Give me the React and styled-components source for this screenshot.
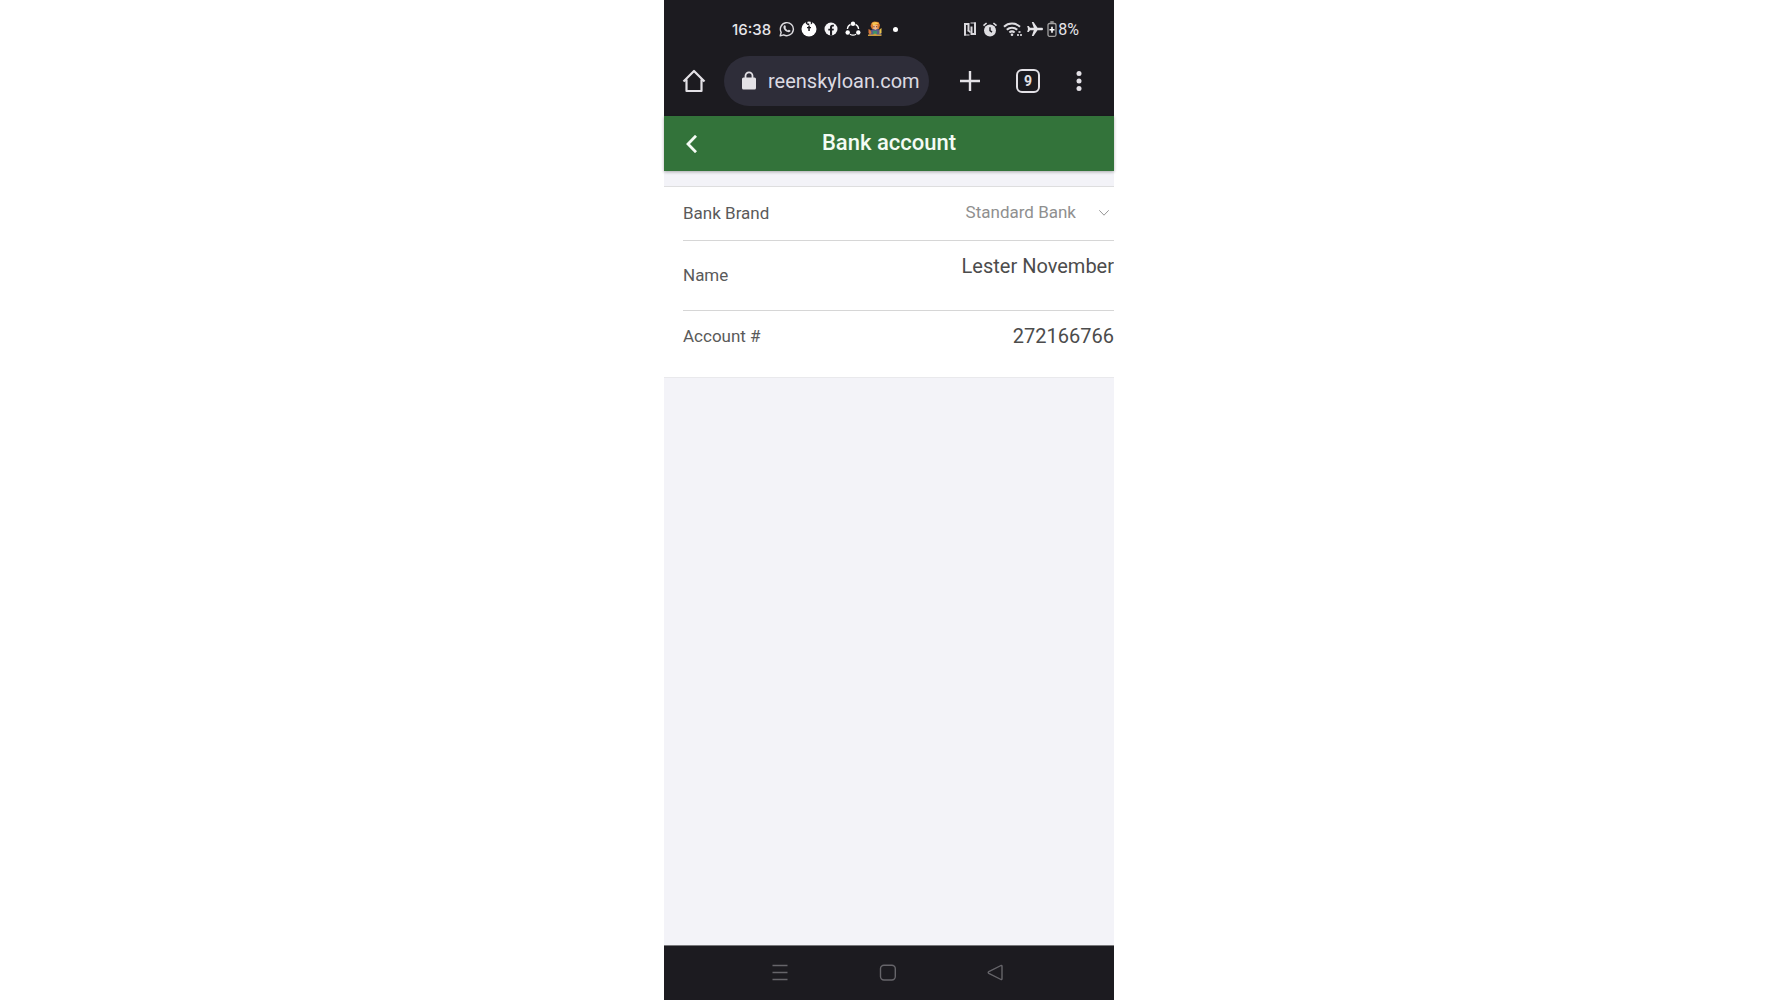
import React, { useState } from 'react';
import styled, { createGlobalStyle } from 'styled-components';

const App = () => {
  const [bank, setBank] = useState('Standard Bank');
  const [url, setUrl] = useState('reenskyloan.com');
  const [name, setName] = useState('Lester November');
  const [account, setAccount] = useState('272166766');

  return (
    <>
      <GlobalStyle />
      <Phone>
        <StatusBar>
          <Clock>16:38</Clock>
          <Notifications>
            <WhatsAppIcon />
            <AlertIcon />
            <FacebookIcon />
            <ShareIcon />
            <HeroIcon />
          </Notifications>
          <Dot />
          <System>
            <NfcIcon />
            <AlarmIcon />
            <WifiIcon />
            <PlaneIcon />
            <Battery>
              <BatteryIcon />
              8%
            </Battery>
          </System>
        </StatusBar>

        <Toolbar>
          <IconButton aria-label="Home">
            <HomeIcon />
          </IconButton>
          <AddressBar>
            <LockIcon />
            <AddressInput
              aria-label="Address"
              value={url}
              onChange={e => setUrl(e.target.value)}
            />
          </AddressBar>
          <ToolbarActions>
            <IconButton aria-label="New tab">
              <PlusIcon />
            </IconButton>
            <TabCount aria-label="Open tabs">9</TabCount>
            <IconButton aria-label="More">
              <MoreIcon />
            </IconButton>
          </ToolbarActions>
        </Toolbar>

        <Header>
          <IconButton aria-label="Back">
            <BackIcon />
          </IconButton>
          <Title>Bank account</Title>
        </Header>

        <Content>
          <Form>
            <Row $height={53}>
              <Label htmlFor="bank">Bank Brand</Label>
              <SelectBox>
                <Select id="bank" value={bank} onChange={e => setBank(e.target.value)}>
                  <option>Standard Bank</option>
                </Select>
                <ChevronIcon />
              </SelectBox>
            </Row>
            <Row $height={70}>
              <Label htmlFor="name">Name</Label>
              <Field id="name" value={name} onChange={e => setName(e.target.value)} />
            </Row>
            <Row $height={52}>
              <Label htmlFor="account">Account #</Label>
              <Field id="account" value={account} onChange={e => setAccount(e.target.value)} />
            </Row>
          </Form>
        </Content>

        <NavBar>
          <IconButton aria-label="Recent apps">
            <RecentsIcon />
          </IconButton>
          <IconButton aria-label="Home screen">
            <SquareIcon />
          </IconButton>
          <IconButton aria-label="Go back">
            <TriangleIcon />
          </IconButton>
        </NavBar>
      </Phone>
    </>
  );
};

/* status bar icons */

const WhatsAppIcon = () =>
<svg width="16" height="16" viewBox="0 0 16 16" fill="none">
  <path d="M1.2 14.8l1-3.5A6.5 6.5 0 1 1 4.700 13.800z" stroke="#dddce0" strokeWidth="1.4" strokeLinejoin="round" />
  <path d="M5.200 4.600c.5-.5 1-.4 1.200.1l.5 1.200c.1.400-.6.900-.5 1.200.5 1 1.300 1.800 2.400 2.300.4.100.8-.8 1.200-.7l1.300.7c.4.200.300.8-.1 1.200-.8.900-2 .8-3.200.2-1.500-.7-2.700-2-3.300-3.400-.4-1.100-.3-2.200.5-2.800z" fill="#dddce0" />
</svg>;

const AlertIcon = () =>
<svg width="16" height="16" viewBox="0 0 16 16">
  <circle cx="8" cy="8" r="7.500" fill="#fff" />
  <path d="M4.800 0h1.600v2.600h1.800V4H6.600L4.800 2.600zM9.800 0h1.400v2.600L9.800 3.600zM7.300 4.500h1.500V6H10v1.300H8.800V10H7.300V7.300H6V6h1.300z" fill="#1c1b20" />
</svg>;

const FacebookIcon = () =>
<svg width="16" height="16" viewBox="0 0 16 16">
  <circle cx="8" cy="8" r="6.500" fill="#f4f4f6" />
  <path d="M7 14.600V9.600H5.300V7.700H7V6.300C7 4.600 8 3.700 9.500 3.700l1.400.1v1.600h-.8c-.8 0-1 .4-1 1v1.300h1.800l-.3 1.900H9.100v5z" fill="#1c1b20" />
</svg>;

const ShareIcon = () =>
<svg width="16" height="16" viewBox="0 0 16 16" fill="none">
  <path d="M5.500 3.400A5.600 5.600 0 0 0 2.400 8M10.500 3.400A5.600 5.600 0 0 1 13.600 8M5 13.200a5.600 5.600 0 0 0 6 0" stroke="#fff" strokeWidth="1.300" />
  <circle cx="8" cy="2.700" r="2.200" fill="#fff" />
  <circle cx="2.700" cy="11.500" r="2.200" fill="#fff" />
  <circle cx="13.300" cy="11.500" r="2.200" fill="#fff" />
</svg>;

const HeroIcon = () =>
<svg width="16" height="16" viewBox="0 0 16 16">
  <path d="M3 10l3-2h5l3 2 .5 4H2z" fill="#5a5d86" />
  <path d="M4.500 2L7 .5l4.500.5 1.500 3-1 4H5L3.500 5z" fill="#d9782c" />
  <path d="M6 4h4.500v3.500L8.500 9 6 7.500z" fill="#f2b98b" />
  <path d="M5 1.800l4-.8 3 1.500-6 2z" fill="#f7c651" />
  <path d="M6.300 5.200h1.200v1H6.300zM9 5.200h1.200v1H9z" fill="#6a3526" />
  <path d="M1.500 8l2 1 1 3-1.500 1.500L1.500 12z" fill="#d9783a" />
  <path d="M6 10h4v3H6z" fill="#3f8f6e" />
  <path d="M12.500 8.500l2-1.500v5l-2 1z" fill="#e9c24a" />
  <path d="M1 13.500h5l2-1 2 1h4.500V15H1z" fill="#c99a3e" />
</svg>;

const NfcIcon = () =>
<svg width="14" height="14" viewBox="0 0 14 14" fill="none" stroke="#d8d7db" strokeWidth="2">
  <path d="M2 13.500V2H5.500V9.500M12 .5V12H8.500V4.500" />
  <path d="M1 13h5.500M7.500 1H13" strokeWidth="1.200" />
  <path d="M5 8l2.500 2.500" strokeWidth="1.500" />
</svg>;

const AlarmIcon = () =>
<svg width="18" height="15" viewBox="0 0 18 15">
  <circle cx="9" cy="8.500" r="6" fill="#dedde1" />
  <path d="M2.500 3.700L5.600 1M15.500 3.700L12.400 1" stroke="#dedde1" strokeWidth="1.600" />
  <path d="M9 5.300v3.300l2 1.500" fill="none" stroke="#1c1b20" strokeWidth="1.400" />
</svg>;

const WifiIcon = () =>
<svg width="20" height="16" viewBox="0 0 20 16" fill="none">
  <path d="M1 5.800a11.600 11.600 0 0 1 16 0M3.800 8.800a7.600 7.600 0 0 1 10.400 0M6.400 11.500a4 4 0 0 1 5.200 0" stroke="#dedde1" strokeWidth="2" />
  <circle cx="9" cy="13.700" r="1.300" fill="#dedde1" />
  <path d="M15.500 10h2v2h-2zM17 13h2v2h-2zM14 13h2v2h-2z" fill="#b9b8bd" />
</svg>;

const PlaneIcon = () =>
<svg width="16" height="14" viewBox="0 0 16 14">
  <path d="M16 7c0-.8-.6-1.300-1.300-1.300H10.500L6.500 0H4.800l2 5.700H3L1.700 4H.2l.8 3-.8 3h1.500L3 8.300h3.800L4.800 14h1.700l4-5.700h4.200C15.400 8.300 16 7.800 16 7z" fill="#e4e3e7" />
</svg>;

const BatteryIcon = () =>
<svg width="10" height="16" viewBox="0 0 10 16" fill="none">
  <rect x="1" y="2.500" width="8" height="12.800" rx="1.500" stroke="#a3a2a2" strokeWidth="1.300" />
  <path d="M3.300 1h3.400" stroke="#a3a2a2" strokeWidth="1.600" />
  <path d="M5 5.800v6M2.500 8.800h5" stroke="#fff" strokeWidth="1.600" />
</svg>;

/* toolbar icons */

const HomeIcon = () =>
<svg width="24" height="24" viewBox="0 0 24 24" fill="none" stroke="#e3e1e6" strokeWidth="2.200" strokeLinejoin="round">
  <path d="M1.500 12.500L12 2l10.500 10.500M4.500 10.500V22h15V10.500" />
</svg>;

const LockIcon = () =>
<svg width="14" height="20" viewBox="0 0 14 20">
  <rect y="6.500" width="14" height="12" rx="1.500" fill="#e3e1e6" />
  <path d="M3.500 8V4.800a3.500 3.500 0 0 1 7 0V8" fill="none" stroke="#e3e1e6" strokeWidth="1.800" />
</svg>;

const PlusIcon = () =>
<svg width="20" height="20" viewBox="0 0 20 20" stroke="#e3e1e6" strokeWidth="2.400">
  <path d="M10 0v20M0 10h20" />
</svg>;

const MoreIcon = () =>
<svg width="6" height="20" viewBox="0 0 6 20" fill="#e3e1e6">
  <circle cx="3" cy="2.600" r="2.500" />
  <circle cx="3" cy="10" r="2.500" />
  <circle cx="3" cy="17.400" r="2.500" />
</svg>;

const BackIcon = () =>
<svg width="12" height="18" viewBox="0 0 12 18" fill="none" stroke="#f4fbf4" strokeWidth="2.800">
  <path d="M11 .8L3 9l8 8.200" />
</svg>;

const ChevronIcon = () =>
<Chevron width="10" height="6" viewBox="0 0 10 6" fill="none" stroke="#969696">
  <path d="M.3.300L5 5.200 9.700.3" />
</Chevron>;

/* navigation icons */

const RecentsIcon = () =>
<svg width="18" height="18" viewBox="0 0 18 18" stroke="#66656a" strokeWidth="1.500">
  <path d="M1.500 1.500h15M1.500 8.500h15M1.500 15.500h15" />
</svg>;

const SquareIcon = () =>
<svg width="18" height="18" viewBox="0 0 18 18" fill="none" stroke="#66656a" strokeWidth="1.400">
  <rect x="1.500" y="1.200" width="14.800" height="14.800" rx="3.500" />
</svg>;

const TriangleIcon = () =>
<svg width="18" height="18" viewBox="0 0 18 18" fill="none" stroke="#66656a" strokeWidth="1.400" strokeLinejoin="round">
  <path d="M14 1.500L1.800 7.700q-1.200.8 0 1.600L14 15.500q1 .2 1-.8V2.300q0-1-1-.8z" />
</svg>;

const GlobalStyle = createGlobalStyle`
  * {
    box-sizing: border-box;
  }

  body {
    margin: 0;
    background-color: #fff;
    font-family: Roboto, sans-serif;
  }

  svg {
    display: block;
    flex: none;
  }
`;

const Phone = styled.div`
  display: flex;
  flex-direction: column;
  width: 100%;
  max-width: 450px;
  min-height: 100vh;
  margin: 0 auto;
  background-color: #f3f3f8;
`;

const StatusBar = styled.div`
  display: flex;
  align-items: center;
  height: 56px;
  padding: 2px 35px 0 68px;
  background-color: #1c1b20;
  color: #e6e5e9;
`;

const Clock = styled.time`
  font-family: Inter, sans-serif;
  font-size: 15px;
  font-weight: 500;
`;

const Notifications = styled.div`
  display: flex;
  gap: 6px;
  margin-left: 8px;
`;

const Dot = styled.span`
  width: 5px;
  height: 5px;
  margin-left: 10px;
  border-radius: 50%;
  background-color: #fff;
`;

const System = styled.div`
  display: flex;
  align-items: center;
  gap: 4px;
  margin-left: auto;
`;

const Battery = styled.div`
  display: flex;
  align-items: center;
  gap: 1px;
  font-size: 16px;
`;

const Toolbar = styled.div`
  display: flex;
  align-items: center;
  height: 60px;
  padding: 0 32px 10px 18px;
  background-color: #1c1b20;
`;

const IconButton = styled.button`
  display: flex;
  align-items: center;
  padding: 0;
  border: 0;
  background: none;
  cursor: pointer;
`;

const AddressBar = styled.div`
  display: flex;
  flex: 1;
  align-items: center;
  gap: 12px;
  min-width: 0;
  height: 50px;
  margin-left: 18px;
  padding: 0 8px 0 18px;
  border-radius: 25px;
  background-color: #2e2d39;
`;

const AddressInput = styled.input`
  flex: 1;
  min-width: 0;
  padding: 0;
  border: 0;
  outline: none;
  background: none;
  color: #dcdae2;
  font-family: inherit;
  font-size: 20px;
`;

const ToolbarActions = styled.div`
  display: flex;
  align-items: center;
  gap: 36px;
  margin-left: 31px;
`;

const TabCount = styled.button`
  width: 24px;
  height: 24px;
  padding: 0;
  border: 2px solid #e3e1e6;
  border-radius: 6px;
  background: none;
  color: #e3e1e6;
  font-family: inherit;
  font-size: 14px;
  font-weight: 700;
  line-height: 20px;
  cursor: pointer;
`;

const Header = styled.header`
  display: flex;
  align-items: center;
  height: 55px;
  padding: 0 21px;
  background-color: #33733a;
  box-shadow: 0 1px 3px rgba(0, 0, 0, .3);
`;

const Title = styled.h1`
  flex: 1;
  margin: 0 12px 0 0;
  padding-bottom: 2px;
  color: #f4fbf4;
  font-size: 22px;
  font-weight: 500;
  text-align: center;
`;

const Content = styled.main`
  flex: 1;
  padding-top: 15px;
`;

const Form = styled.form`
  padding: 0 0 15px 19px;
  border-top: 1px solid #dededf;
  border-bottom: 1px solid #e9e9ec;
  background-color: #fff;
`;

const Row = styled.div`
  display: flex;
  align-items: center;
  height: ${props => props.$height}px;

  & + & {
    border-top: 1px solid #d6d6d6;
  }
`;

const Label = styled.label`
  flex: none;
  padding-bottom: 2px;
  color: #5a5a5a;
  font-size: 17px;
`;

const SelectBox = styled.div`
  position: relative;
  flex: 1;
`;

const Select = styled.select`
  width: 100%;
  height: 52px;
  padding: 0 38px 4px 0;
  border: 0;
  outline: none;
  appearance: none;
  background: none;
  color: #8f8f8f;
  font-family: inherit;
  font-size: 17px;
  text-align: right;
  text-align-last: right;
`;

const Chevron = styled.svg`
  position: absolute;
  right: 5px;
  top: 22px;
  pointer-events: none;
`;

const Field = styled.input`
  flex: 1;
  align-self: flex-start;
  min-width: 0;
  height: 50px;
  padding: 0;
  border: 0;
  outline: none;
  background: none;
  color: #4c4c4c;
  font-family: inherit;
  font-size: 20px;
  text-align: right;
`;

const NavBar = styled.nav`
  display: flex;
  align-items: center;
  justify-content: center;
  gap: 90px;
  height: 55px;
  padding-right: 2px;
  border-top: 1px solid #77777a;
  background-color: #1c1b20;
`;

export default App;
